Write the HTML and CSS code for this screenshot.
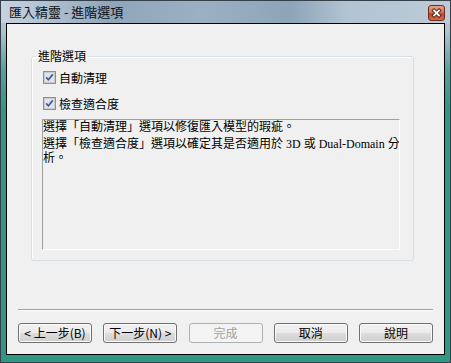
FILE: index.html
```html
<!DOCTYPE html>
<html lang="zh-Hant">

<head>

    <meta charset="UTF-8">
    <meta name="viewport" content="width=device-width, initial-scale=1.0">
    <title>匯入精靈 - 進階選項</title>

    <link rel="stylesheet" href="styles.css">

</head>

<body>

    <div class="window">

        <div class="titlebar">
            <span class="title">匯入精靈 - 進階選項</span>
            <span class="close">
                <svg width="15" height="14" viewBox="0 0 15 14">
                    <path d="M5 4.5 L10 9.5 M10 4.5 L5 9.5" stroke="#4a1c14" stroke-width="3.6" stroke-linecap="square" fill="none" />
                    <path d="M5 4.5 L10 9.5 M10 4.5 L5 9.5" stroke="#ffffff" stroke-width="1.8" stroke-linecap="square" fill="none" />
                </svg>
            </span>
        </div>

        <div class="client">

            <fieldset class="group">
                <legend>進階選項</legend>

                <label class="check">
                    <svg class="box" width="13" height="13" viewBox="0 0 13 13">
                        <rect x="0.5" y="0.5" width="12" height="12" fill="#f4f4f4" stroke="#8e8f8f" />
                        <rect x="1.5" y="1.5" width="10" height="10" fill="#e2e4e7" stroke="#c8cacd" />
                        <path d="M3.2 6.4 L5.4 8.8 L9.8 3.4" stroke="#3d5a98" stroke-width="1.7" fill="none" />
                    </svg>
                    <span>自動清理</span>
                </label>

                <label class="check">
                    <svg class="box" width="13" height="13" viewBox="0 0 13 13">
                        <rect x="0.5" y="0.5" width="12" height="12" fill="#f4f4f4" stroke="#8e8f8f" />
                        <rect x="1.5" y="1.5" width="10" height="10" fill="#e2e4e7" stroke="#c8cacd" />
                        <path d="M3.2 6.4 L5.4 8.8 L9.8 3.4" stroke="#3d5a98" stroke-width="1.7" fill="none" />
                    </svg>
                    <span>檢查適合度</span>
                </label>

                <div class="info">
                    <p>選擇「自動清理」選項以修復匯入模型的瑕疵。</p>
                    <p>選擇「檢查適合度」選項以確定其是否適用於 3D 或 Dual-Domain 分<br>析。</p>
                </div>
            </fieldset>

            <div class="separator"></div>

            <div class="buttons">
                <button>&lt; 上一步(B)</button>
                <button>下一步(N) &gt;</button>
                <button disabled>完成</button>
                <button>取消</button>
                <button>說明</button>
            </div>

        </div>

    </div>

</body>

</html>
```

FILE: styles.css
```css
html,
body {
    margin: 0px;
    background-color: #ffffff;
}

body {
    font-family: "Noto Sans CJK TC", sans-serif;
    font-size: 12px;
    color: #000;
}

.window {
    width: 451px;
    height: 363px;
    box-sizing: border-box;
    border: 1px solid #36404a;
    padding: 0 5px 7px 5px;
    display: flex;
    flex-direction: column;
    background:
        linear-gradient(to right, #c6d3df 0, #aebfcf 50px, #8fa5ba 110px, #9cb0c3 200px, #8da4b9 290px, #b2c3d2 345px, #bdcbd8 451px) 0 0 / 100% 22px no-repeat,
        linear-gradient(to bottom, #bccada 0, #b0c1d1 30px, #55a097 70px, #2f9784 110px, #2f9784 100%);
}

.titlebar {
    height: 22px;
    display: flex;
    justify-content: space-between;
    align-items: center;
    padding-left: 3px;
}

.title {
    font-size: 13px;
    color: #101010;
    line-height: 16px;
}

.close {
    align-self: flex-start;
    margin-top: 4px;
    width: 17px;
    height: 16px;
    box-sizing: border-box;
    border: 1px solid #6e2a1e;
    border-radius: 3px;
    background: linear-gradient(to bottom, #e8a08c 0%, #d97257 45%, #c4442a 55%, #d2684c 100%);
    display: flex;
    justify-content: center;
    align-items: center;
}

.client {
    flex: 1;
    border: 1px solid #000;
    background-color: #f0f0f0;
    padding-top: 25px;
    display: flex;
    flex-direction: column;
}

.group {
    width: 383px;
    box-sizing: border-box;
    margin: 0 30px 0 24px;
    padding: 8px 13px 10px 10px;
    border: 1px solid #d5dfe5;
    border-radius: 3px;
    box-shadow: inset 1px 1px 0 #ffffff;
    min-inline-size: 0;
}

.group legend {
    margin-left: -6px;
    padding: 0 2px;
    line-height: 14px;
}

.check {
    display: flex;
    align-items: center;
    height: 13px;
    padding-left: 1px;
    margin-bottom: 13px;
    line-height: 13px;
}

.check .box {
    margin-right: 3px;
    flex: none;
}

.check:nth-of-type(2) {
    margin-bottom: 9px;
}

.info {
    height: 131px;
    box-sizing: border-box;
    border-top: 1px solid #a0a0a0;
    border-left: 1px solid #a0a0a0;
    border-right: 1px solid #ffffff;
    border-bottom: 1px solid #ffffff;
    font-family: "Liberation Serif", "Noto Sans CJK TC", serif;
    line-height: 14px;
    white-space: nowrap;
    overflow: hidden;
}

.info p {
    margin: 0 0 3px 0;
}

.separator {
    margin: 48px 11px 0 11px;
    border-top: 1px solid #a0a0a0;
    border-bottom: 1px solid #ffffff;
}

.buttons {
    display: flex;
    justify-content: space-between;
    margin: 12px 11px 0 11px;
}

.buttons button {
    width: 74px;
    height: 20px;
    padding: 0;
    font-family: "Noto Sans CJK TC", sans-serif;
    font-size: 12px;
    line-height: 16px;
    color: #000;
    border: 1px solid #707070;
    border-radius: 3px;
    background: linear-gradient(to bottom, #f2f2f2 0%, #ebebeb 48%, #dddddd 52%, #cfcfcf 100%);
    box-shadow: inset 0 0 0 1px #fbfbfb;
}

.buttons button:disabled {
    color: #a0a0a0;
    border-color: #adb2b5;
    background: #f4f4f4;
    box-shadow: none;
}
```
